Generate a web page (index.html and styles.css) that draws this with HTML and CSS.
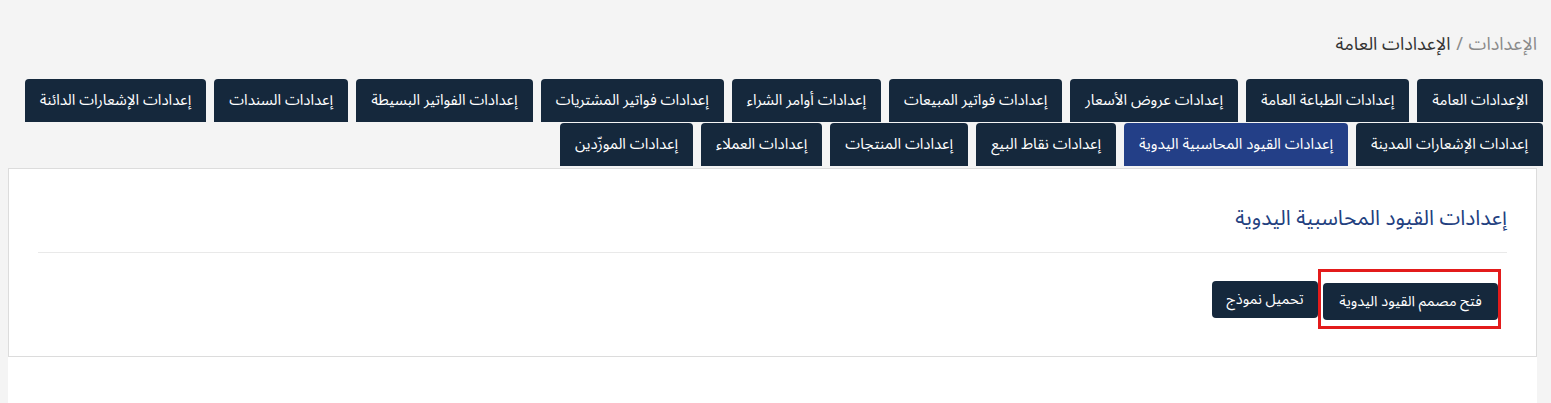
FILE: index.html
```
<!DOCTYPE html>
<html lang="ar" dir="rtl">
<head>
<meta charset="utf-8">
<title>الإعدادات العامة</title>
<link rel="stylesheet" href="styles.css">
</head>
<body>
<div class="breadcrumb">
  <span class="crumb-parent">الإعدادات</span>
  <span class="crumb-sep">/</span>
  <span class="crumb-current">الإعدادات العامة</span>
</div>
<ul class="tabs">
  <li class="tab">الإعدادات العامة</li>
  <li class="tab">إعدادات الطباعة العامة</li>
  <li class="tab">إعدادات عروض الأسعار</li>
  <li class="tab">إعدادات فواتير المبيعات</li>
  <li class="tab">إعدادات أوامر الشراء</li>
  <li class="tab">إعدادات فواتير المشتريات</li>
  <li class="tab">إعدادات الفواتير البسيطة</li>
  <li class="tab">إعدادات السندات</li>
  <li class="tab">إعدادات الإشعارات الدائنة</li>
  <li class="tab">إعدادات الإشعارات المدينة</li>
  <li class="tab active">إعدادات القيود المحاسبية اليدوية</li>
  <li class="tab">إعدادات نقاط البيع</li>
  <li class="tab">إعدادات المنتجات</li>
  <li class="tab">إعدادات العملاء</li>
  <li class="tab">إعدادات الموزّدين</li>
</ul>
<div class="tab-content">
  <div class="panel">
    <h2 class="panel-title">إعدادات القيود المحاسبية اليدوية</h2>
    <div class="actions">
      <span class="highlight">
        <button class="btn">فتح مصمم القيود اليدوية</button>
      </span>
      <button class="btn btn-small">تحميل نموذج</button>
    </div>
  </div>
</div>
</body>
</html>
```
FILE: styles.css
```
html, body {
  margin: 0;
  padding: 0;
  background: #f4f4f4;
}
body {
  padding: 0 8px 0 8px;
  font-family: "Noto Sans Arabic", "DejaVu Sans", sans-serif;
  color: #333;
  overflow: hidden;
}
.breadcrumb {
  padding: 31px 6px 0 0;
  height: 46px;
  box-sizing: border-box;
  font-size: 18px;
  line-height: 26px;
}
.crumb-parent { color: #8a8a8a; }
.crumb-sep { color: #8a8a8a; margin: 0 1px; }
.crumb-current { color: #333; }

.tabs {
  list-style: none;
  margin: 0;
  padding: 0;
  display: flex;
  flex-wrap: wrap;
  column-gap: 8px;
  row-gap: 1px;
  margin-top: 33px;
}
.tab {
  background: #15283c;
  color: #fff;
  height: 43px;
  line-height: 43px;
  padding: 0 15px;
  font-size: 15px;
  border-radius: 4px 4px 0 0;
  white-space: nowrap;
}
.tab.active {
  background: #233f87;
}
.tab-content {
  margin-top: 2px;
  margin-right: 6px;
  background: #fff;
  min-height: 400px;
}
.panel {
  border: 1px solid #dcdcdc;
  padding: 34px 29px 27px 29px;
}
.panel-title {
  margin: 0;
  font-weight: normal;
  font-size: 21px;
  line-height: 30px;
  color: #233f7f;
  padding-bottom: 19px;
  border-bottom: 1px solid #e9e9e9;
}
.actions {
  display: flex;
  align-items: center;
  padding-top: 16px;
  padding-right: 6px;
}
.highlight {
  display: inline-flex;
  padding: 11px 0 6px 2px;
  border: 3px solid #e31b1b;
}
.btn {
  background: #15283c;
  color: #fff;
  border: none;
  border-radius: 4px;
  height: 37px;
  padding: 0 16px;
  width: 175px;
  font-family: inherit;
  font-size: 14.5px;
}
.btn-small {
  width: 106px;
  padding: 0 8px;
}
```
